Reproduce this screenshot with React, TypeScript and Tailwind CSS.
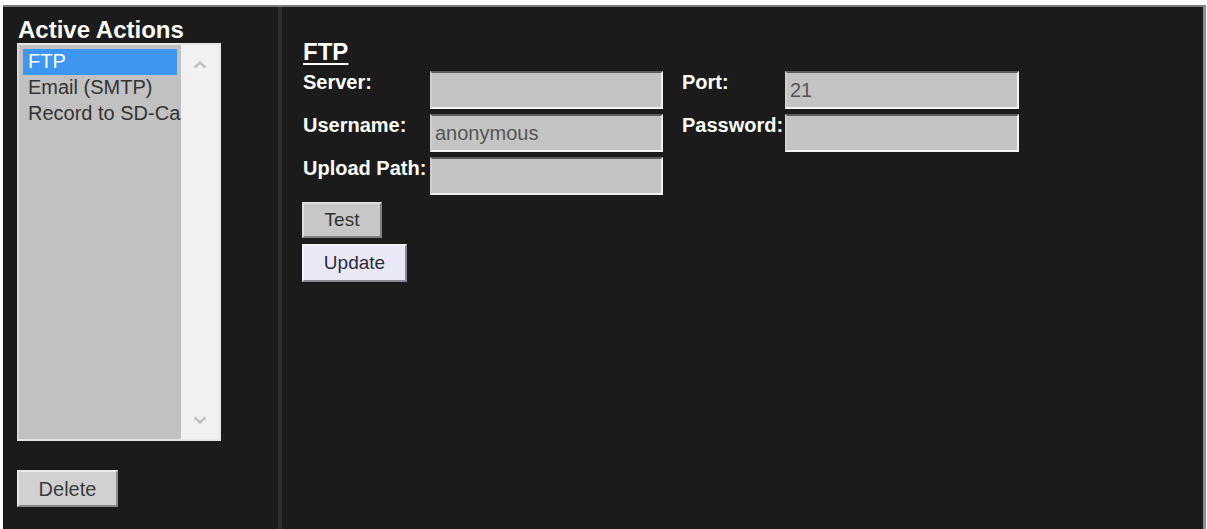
import { useState } from "react";

const sans = "font-['Liberation_Sans',Arial,sans-serif]";

const actions = ["FTP", "Email (SMTP)", "Record to SD-Ca"];

function Chevron({ down }: { down?: boolean }) {
  return (
    <svg width="14" height="8" viewBox="0 0 14 8" className="block">
      <polyline
        points={down ? "1.5,1.5 7,6.5 12.5,1.5" : "1.5,6.5 7,1.5 12.5,6.5"}
        fill="none"
        stroke="#c2c2c2"
        strokeWidth="2.4"
      />
    </svg>
  );
}

function TextBox({ value, width }: { value?: string; width: string }) {
  return (
    <input
      type="text"
      defaultValue={value}
      className={`${width} h-[38px] bg-[#c4c4c4] border-2 border-t-[#5c5c5c] border-l-[#cfcfcf] border-b-[#f2f2f2] border-r-[#f2f2f2] pl-[3px] text-[20px] text-[#555] outline-none ${sans}`}
    />
  );
}

function Label({ text, width }: { text: string; width: string }) {
  return <div className={`${width} text-[20px] leading-[22px] font-bold text-white`}>{text}</div>;
}

export default function App() {
  const [selected, setSelected] = useState(0);

  return (
    <div className={`h-screen bg-white pt-[5px] pl-[3px] pr-px ${sans}`}>
      <div className="flex h-full border-t-2 border-[#7c7c7c] border-r-[3px] border-r-[#8e8e8e] bg-[#1b1b1b]">
        {/* action list */}
        <div className="w-[275px] flex flex-col pl-[14px] pt-[9px]">
          <h2 className="pl-px text-[24px] leading-[27px] font-bold text-white">Active Actions</h2>
          <div className="flex w-[204px] h-[398px] border-2 border-[#e6e6e6] border-l-[#d9d9d9] bg-[#c1c1c1]">
            <ul className="flex-1 overflow-hidden px-[4px] pt-[4px]">
              {actions.map((a, i) => (
                <li
                  key={a}
                  onClick={() => setSelected(i)}
                  className={`h-[26px] pl-[5px] text-[20px] leading-[25px] whitespace-nowrap cursor-default ${
                    selected === i ? "bg-[#3d96f0] text-white" : "text-[#333]"
                  }`}
                >
                  {a}
                </li>
              ))}
            </ul>
            <div className="w-[38px] bg-[#f1f1f1] flex flex-col items-center justify-between pt-[16px] pb-[15px]">
              <Chevron />
              <Chevron down />
            </div>
          </div>
          <button className="mt-[29px] w-[101px] h-[37px] bg-[#d1d1d1] border-2 border-t-[#ececec] border-l-[#ececec] border-b-[#8a8a8a] border-r-[#8a8a8a] text-[20px] text-[#3a3a3a]">
            Delete
          </button>
        </div>

        <div className="w-[4px] bg-[#2e2e2e]" />

        {/* settings form */}
        <div className="flex-1 pl-[21px] pt-[31px]">
          <h3 className="text-[24px] leading-[28px] font-bold text-white underline underline-offset-[3px] decoration-2">
            FTP
          </h3>
          <div className="mt-[5px] flex flex-col gap-[5px]">
            <div className="flex">
              <Label text="Server:" width="w-[127px]" />
              <TextBox width="w-[233px]" />
              <div className="w-[19px]" />
              <Label text="Port:" width="w-[103px]" />
              <TextBox value="21" width="w-[234px]" />
            </div>
            <div className="flex">
              <Label text="Username:" width="w-[127px]" />
              <TextBox value="anonymous" width="w-[233px]" />
              <div className="w-[19px]" />
              <Label text="Password:" width="w-[103px]" />
              <TextBox width="w-[234px]" />
            </div>
            <div className="flex">
              <Label text="Upload Path:" width="w-[127px]" />
              <TextBox width="w-[233px]" />
            </div>
          </div>
          <div className="mt-[7px] flex flex-col items-start gap-[6px] -ml-px">
            <button className="w-[80px] h-[36px] bg-[#c7c7c7] border-2 border-t-[#dedede] border-l-[#dedede] border-b-[#7f7f7f] border-r-[#7f7f7f] text-[19px] text-[#333]">
              Test
            </button>
            <button className="w-[105px] h-[38px] bg-[#e8e8f7] border-2 border-t-[#f4f4fb] border-l-[#f4f4fb] border-b-[#8a8a94] border-r-[#8a8a94] text-[19px] text-[#2c2c3c]">
              Update
            </button>
          </div>
        </div>
      </div>
    </div>
  );
}
